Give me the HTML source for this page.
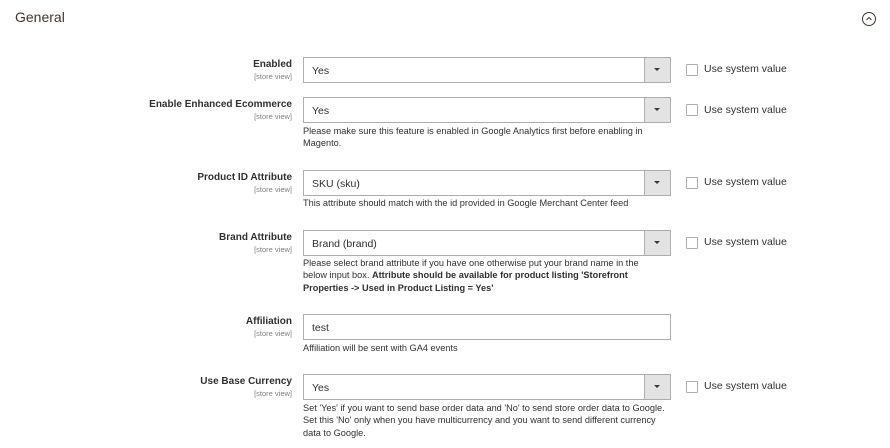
<!DOCTYPE html>
<html><head><meta charset="utf-8"><style>
body{margin:0;width:890px;height:448px;background:#fff;font-family:"Liberation Sans",sans-serif;color:#303030;position:relative;overflow:hidden}
.a{position:absolute}
h1{position:absolute;left:15px;top:9px;margin:0;font-size:14px;font-weight:normal;color:#41362f}
.lab{position:absolute;right:598px;text-align:right;font-size:10px;font-weight:bold;color:#303030;white-space:nowrap}
.lab small{display:block;font-size:7.5px;font-weight:normal;color:#808080;margin-top:2px}
.sel{position:absolute;left:303px;width:366px;height:24px;border:1px solid #adadad;background:#fff;font-size:10.5px;line-height:26px;text-indent:8px;box-sizing:content-box}
.sel .b{position:absolute;right:0;top:0;width:25px;height:24px;background:#e3e3e3;border-left:1px solid #adadad}
.sel .b:after{content:"";position:absolute;left:9px;top:10px;border-left:3px solid transparent;border-right:3px solid transparent;border-top:3.5px solid #41362f}
.cb{position:absolute;left:686px;width:10px;height:10px;border:1px solid #adadad;border-radius:1px}
.cbt{position:absolute;left:704px;font-size:10.5px;color:#303030}
.note{position:absolute;left:303px;width:372px;font-size:9.2px;line-height:12.4px;color:#303030}
</style></head><body>
<h1>General</h1>
<svg class="a" style="left:861px;top:11px" width="16" height="16" viewBox="0 0 16 16"><circle cx="8" cy="8" r="6.5" fill="none" stroke="#41362f" stroke-width="1"/><path d="M5.5 9 L8 6.5 L10.5 9" fill="none" stroke="#41362f" stroke-width="1"/></svg>

<div class="lab" style="top:59px">Enabled<small>[store view]</small></div>
<div class="sel" style="top:57px">Yes<div class="b"></div></div>
<div class="cb" style="top:64px"></div><div class="cbt" style="top:63px">Use system value</div>

<div class="lab" style="top:99px">Enable Enhanced Ecommerce<small>[store view]</small></div>
<div class="sel" style="top:97px">Yes<div class="b"></div></div>
<div class="cb" style="top:104px"></div><div class="cbt" style="top:104px">Use system value</div>
<div class="note" style="top:125px;width:350px">Please make sure this feature is enabled in Google Analytics first before enabling in Magento.</div>

<div class="lab" style="top:172px">Product ID Attribute<small>[store view]</small></div>
<div class="sel" style="top:170px">SKU (sku)<div class="b"></div></div>
<div class="cb" style="top:177px"></div><div class="cbt" style="top:176px">Use system value</div>
<div class="note" style="top:197px">This attribute should match with the id provided in Google Merchant Center feed</div>

<div class="lab" style="top:232px">Brand Attribute<small>[store view]</small></div>
<div class="sel" style="top:230px">Brand (brand)<div class="b"></div></div>
<div class="cb" style="top:237px"></div><div class="cbt" style="top:236px">Use system value</div>
<div class="note" style="top:257px;width:350px">Please select brand attribute if you have one otherwise put your brand name in the below input box. <b>Attribute should be available for product listing 'Storefront Properties -&gt; Used in Product Listing = Yes'</b></div>

<div class="lab" style="top:316px">Affiliation<small>[store view]</small></div>
<div class="sel" style="top:314px">test</div>
<div class="note" style="top:342px">Affiliation will be sent with GA4 events</div>

<div class="lab" style="top:376px">Use Base Currency<small>[store view]</small></div>
<div class="sel" style="top:374px">Yes<div class="b"></div></div>
<div class="cb" style="top:381px"></div><div class="cbt" style="top:380px">Use system value</div>
<div class="note" style="top:402px">Set 'Yes' if you want to send base order data and 'No' to send store order data to Google. Set this 'No' only when you have multicurrency and you want to send different currency data to Google.</div>
</body></html>
